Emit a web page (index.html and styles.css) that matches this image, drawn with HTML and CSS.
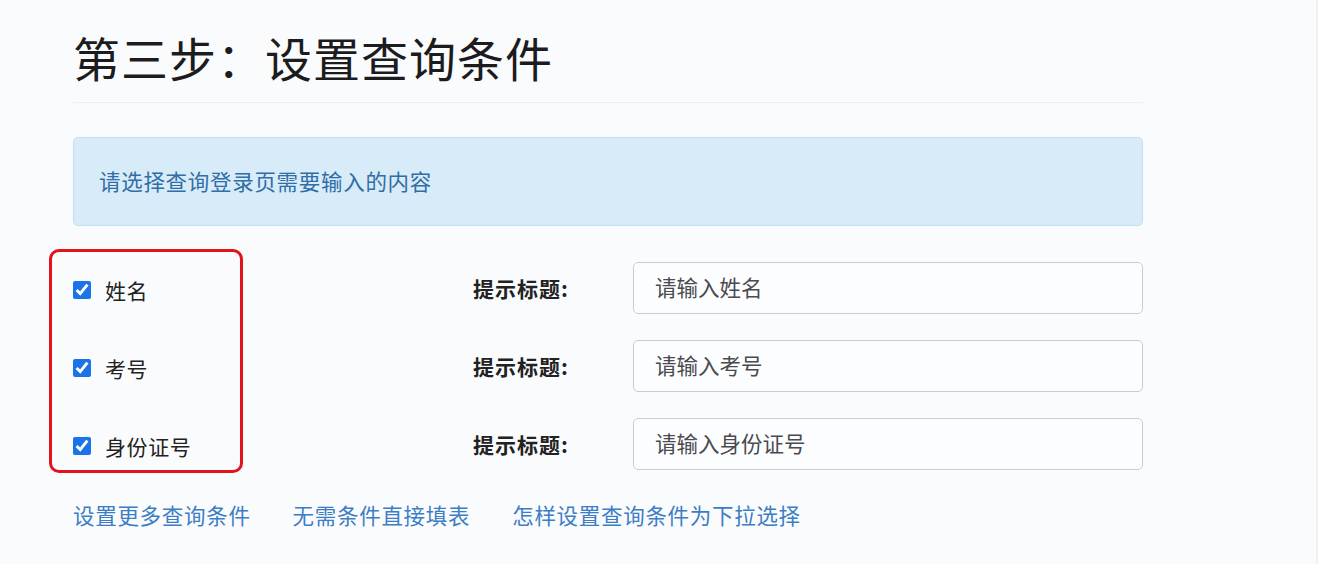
FILE: index.html
```html
<!DOCTYPE html>
<html lang="zh-CN">
<head>
  <meta charset="UTF-8">
  <meta name="viewport" content="width=device-width, initial-scale=1">
  <title>设置查询条件</title>
  <link rel="stylesheet" href="styles.css">
</head>
<body>
  <div class="page">
    <div class="header">
      <h1>第三步：设置查询条件</h1>
    </div>

    <div class="alert">请选择查询登录页需要输入的内容</div>

    <div class="fields">
      <div class="mark"></div>

      <div class="row">
        <label class="check"><input type="checkbox" checked> 姓名</label>
        <span class="tip">提示标题:</span>
        <input class="text" type="text" placeholder="请输入姓名">
      </div>
      <div class="row">
        <label class="check"><input type="checkbox" checked> 考号</label>
        <span class="tip">提示标题:</span>
        <input class="text" type="text" placeholder="请输入考号">
      </div>
      <div class="row">
        <label class="check"><input type="checkbox" checked> 身份证号</label>
        <span class="tip">提示标题:</span>
        <input class="text" type="text" placeholder="请输入身份证号">
      </div>
    </div>

    <div class="links">
      <a href="#">设置更多查询条件</a>
      <a href="#">无需条件直接填表</a>
      <a href="#">怎样设置查询条件为下拉选择</a>
    </div>
  </div>
</body>
</html>
```

FILE: styles.css
```css
body {
  margin: 0;
  background-color: #fafbfd;
  color: #222;
  font-family: "Noto Sans CJK SC", "Noto Sans", sans-serif;
  border-right: 2px solid #f0f1f3;
  min-height: 564px;
  box-sizing: border-box;
}
.page {
  width: 1070px;
  margin-left: 73px;
}
.header {
  padding-top: 29px;
  padding-bottom: 17px;
  border-bottom: 1px solid #eceef1;
}
h1 {
  margin: 0;
  font-size: 47px;
  font-weight: 400;
  line-height: 56px;
  letter-spacing: 1px;
  color: #1c1c1e;
}
.alert {
  margin-top: 34px;
  padding: 28px 25px 30px;
  background-color: #d8ebf9;
  border: 1px solid #bde0f4;
  border-radius: 5px;
  color: #2f6ea6;
  font-size: 21.5px;
  line-height: 29px;
  letter-spacing: 0.7px;
}
.fields {
  position: relative;
  margin-top: 36px;
  display: flex;
  flex-direction: column;
  gap: 26px;
}
.mark {
  position: absolute;
  left: -24px;
  top: -13px;
  width: 188px;
  height: 218px;
  border: 3px solid #e3131b;
  border-radius: 10px;
}
.row {
  display: grid;
  grid-template-columns: 400px 160px 510px;
  align-items: center;
  height: 52px;
}
.check {
  display: flex;
  align-items: center;
  gap: 14px;
  font-size: 21px;
  letter-spacing: 0.6px;
  color: #222;
  padding-top: 3px;
}
.check input {
  width: 18px;
  height: 18px;
  margin: 0;
  accent-color: #1a73e8;
}
.tip {
  font-size: 21px;
  font-weight: 700;
  letter-spacing: 1px;
  color: #222;
}
.text {
  height: 52px;
  box-sizing: border-box;
  padding: 0 21px 3px;
  border: 1px solid #c9ccd1;
  border-radius: 5px;
  background-color: #fcfdfe;
  font-family: inherit;
  font-size: 21.5px;
}
.text::placeholder {
  color: #4a4a4f;
}
.links {
  margin-top: 30px;
  display: flex;
  gap: 42px;
}
.links a {
  color: #3c7ec6;
  text-decoration: none;
  font-size: 21.5px;
  line-height: 30px;
  letter-spacing: 0.7px;
}
```
